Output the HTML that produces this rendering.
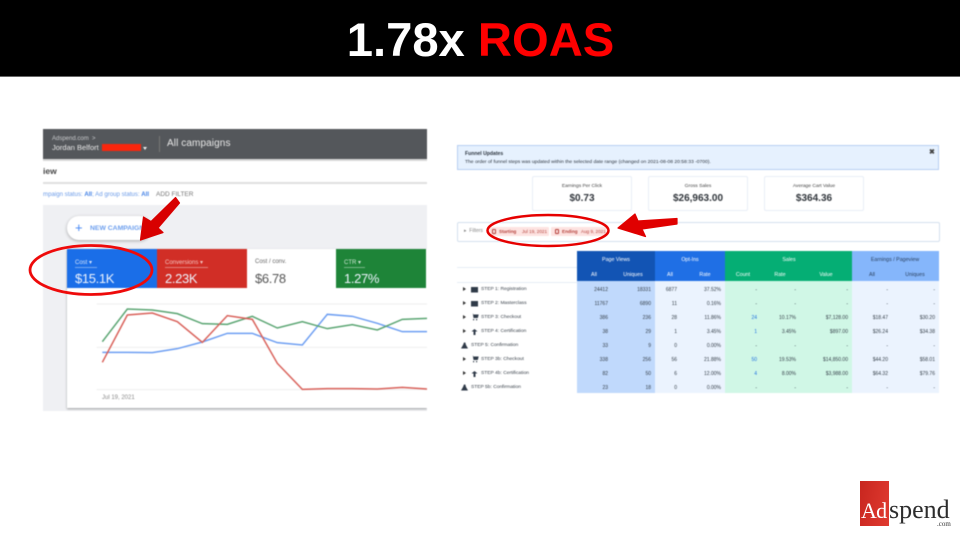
<!DOCTYPE html>
<html><head><meta charset="utf-8"><style>
*{box-sizing:border-box}
html,body{margin:0;padding:0}
body{width:960px;height:540px;position:relative;overflow:hidden;background:#fff;font-family:"Liberation Sans",sans-serif}
.a{position:absolute;white-space:nowrap}
#top{position:absolute;left:0;top:0;width:960px;height:77px;background:#000;border-bottom:1px solid #666}
#title{position:absolute;left:0;top:14px;width:961px;text-align:center;font-size:47.200px;line-height:54px;font-weight:bold;color:#fff}
#title span{color:#f00}
#L{position:absolute;left:43px;top:129px;width:384px;height:282px;overflow:hidden;background:#fff;filter:blur(.45px)}
#R{position:absolute;left:0;top:0;width:960px;height:540px;filter:blur(.45px)}
.card{position:absolute;top:120px;height:39px;width:90px}
.card .l{position:absolute;left:8px;top:10px;font-size:6px;color:#d6e4fb}
.card .u{position:absolute;left:8px;top:18px;height:1px;background:rgba(255,255,255,.4)}
.card .v{position:absolute;left:8px;top:22px;font-size:13px;letter-spacing:-.35px;color:#eef4fe}
.stat{position:absolute;top:176px;height:35px;width:100px;border:1px solid #e8eef6;border-radius:2px;background:#fff;text-align:center;color:#333}
.stat div{font-size:4.900px;margin-top:6px;line-height:7px;color:#444}
.stat b{display:block;font-size:10px;line-height:15px;color:#30353b;margin-top:1px}
.h{position:absolute;top:251px;height:30px}
.t{position:absolute;font-size:5.300px;transform:translateX(-50%);white-space:nowrap;color:#fff}
.col{position:absolute;top:281px;height:112px}
.r{position:absolute;left:0;width:960px;height:8px;font-size:5px;line-height:8px;color:#36404a}
.r span{position:absolute;white-space:nowrap}
.r span:nth-child(1){right:352px}.r span:nth-child(2){right:309px}.r span:nth-child(3){right:283px}.r span:nth-child(4){right:239px}
.r span:nth-child(5){right:203px}.r span:nth-child(6){right:164px}.r span:nth-child(7){right:112px}.r span:nth-child(8){right:72px}.r span:nth-child(9){right:25px}
.r em{font-style:normal;color:#1f6fe0}
.n{position:absolute;font-size:4.900px;line-height:8px;color:#3c444d;white-space:nowrap}
.tri{position:absolute;width:0;height:0;border-left:3px solid #333;border-top:2px solid transparent;border-bottom:2px solid transparent}
.ic{position:absolute}
.chip{position:absolute;top:228px;font-size:4.600px;line-height:7px;color:#b5413b;white-space:nowrap}
</style></head><body>
<div id="top"></div>
<div id="title">1.78x <span>ROAS</span></div>

<div id="L">
 <div class="a" style="left:0;top:0;width:384px;height:30px;background:#54575b"></div>
 <div class="a" style="left:0;top:30px;width:384px;height:2px;background:#d8d8d8"></div>
 <div class="a" style="left:9px;top:7px;font-size:6px;color:#c8cacc">Adspend.com &nbsp;&gt;</div>
 <div class="a" style="left:9px;top:14px;font-size:7.500px;color:#e8e8e8">Jordan Belfort</div>
 <div class="a" style="left:59px;top:15px;width:39px;height:7px;background:#f9260d"></div>
 <div class="a" style="left:100px;top:18px;width:0;height:0;border-left:2.500px solid transparent;border-right:2.500px solid transparent;border-top:3px solid #eee"></div>
 <div class="a" style="left:116px;top:7px;width:1px;height:16px;background:#777"></div>
 <div class="a" style="left:124px;top:9px;font-size:10px;letter-spacing:.1px;color:#e8e8e8">All campaigns</div>
 <div class="a" style="left:0;top:37px;font-size:8.500px;font-weight:bold;color:#444">iew</div>
 <div class="a" style="left:0;top:53px;width:384px;height:2px;background:#e0e0e0"></div>
 <div class="a" style="left:0;top:62px;font-size:6.100px;color:#6b9be8">mpaign status: <b style="color:#3f7fe6">All</b>; Ad group status: <b style="color:#3f7fe6">All</b></div>
 <div class="a" style="left:113px;top:62px;font-size:6.500px;color:#777">ADD FILTER</div>
 <div class="a" style="left:0;top:76px;width:384px;height:206px;background:#eff0f3"></div>
 <div class="a" style="left:24px;top:87px;width:84px;height:24px;border-radius:12px;background:#fff;box-shadow:0 1px 3px rgba(0,0,0,.3)"></div>
 <div class="a" style="left:32px;top:90px;font-size:13px;line-height:18px;color:#4285f4">+</div>
 <div class="a" style="left:47px;top:96px;font-size:6.800px;font-weight:bold;color:#6d9fee">NEW CAMPAIGN</div>
 <div class="a" style="left:24px;top:120px;width:360px;height:159px;background:#fff;box-shadow:0 1px 2px rgba(0,0,0,.35)"></div>
 <div class="card" style="left:24px;background:#1a6ee8"><div class="l">Cost &#9662;</div><div class="u" style="width:22px"></div><div class="v">$15.1K</div></div>
 <div class="card" style="left:114px;background:#d12e26"><div class="l" style="color:#f3c4c0">Conversions &#9662;</div><div class="u" style="width:43px"></div><div class="v">2.23K</div></div>
 <div class="card" style="left:204px;width:89px;background:#fff"><div class="l" style="color:#666">Cost / conv.</div><div class="v" style="color:#555">$6.78</div></div>
 <div class="card" style="left:293px;background:#1e8438"><div class="l" style="color:#cfe6d5">CTR &#9662;</div><div class="u" style="width:21px"></div><div class="v">1.27%</div></div>
 <svg class="a" style="left:-3px;top:161px" width="387" height="121" viewBox="40 290 387 121">
  <g transform="translate(40 290) scale(.33333)" fill="none">
   <path d="M170 42H1161M170 172H1161M170 299H1161" stroke="#eee" stroke-width="3"/>
   <path d="M187 187L262 187 337 188 412 176 487 156 562 130 637 130 712 158 787 165 862 73 937 79 1012 100 1087 125 1162 125" stroke="#6d9ef2" stroke-width="4.500"/>
   <path d="M187 155L262 57 337 60 412 71 487 101 562 103 637 79 712 114 787 95 862 116 937 104 1012 120 1087 88 1162 85" stroke="#5aa572" stroke-width="4.500"/>
   <path d="M187 217L262 75 337 69 412 95 487 157 562 77 637 88 712 220 787 298 862 296 937 296 1012 297 1087 292 1162 297" stroke="#d9615a" stroke-width="4.500"/>
  </g>
 </svg>
 <div class="a" style="left:59px;top:266px;font-size:6px;color:#8a8a8a">Jul 19, 2021</div>
</div>

<div id="R">
 <div class="a" style="left:457px;top:145px;width:482px;height:25px;background:#e6f1fe;border:1px solid #b7cff2"></div>
 <div class="a" style="left:465px;top:151px;font-size:5.100px;font-weight:bold;color:#2e3640">Funnel Updates</div>
 <div class="a" style="left:465px;top:159px;font-size:4.980px;color:#2e3640">The order of funnel steps was updated within the selected date range (changed on 2021-08-08 20:58:33 -0700).</div>
 <div class="a" style="left:929px;top:148px;font-size:7px;font-weight:bold;color:#444">&#10006;</div>

 <div class="stat" style="left:532px"><div>Earnings Per Click</div><b>$0.73</b></div>
 <div class="stat" style="left:648px"><div>Gross Sales</div><b>$26,963.00</b></div>
 <div class="stat" style="left:764px"><div>Average Cart Value</div><b>$364.36</b></div>

 <div class="a" style="left:457px;top:222px;width:483px;height:20px;border:1px solid #d5e0ee;border-radius:2px;background:#fff"></div>
 <div class="a" style="left:464px;top:228px;font-size:5px;color:#888">&#9656;&nbsp; Filters</div>
 <div class="a" style="left:489px;top:227px;width:60px;height:9px;background:#fde3e1;border-radius:1px"></div>
 <div class="a" style="left:551px;top:227px;width:56px;height:9px;background:#fde3e1;border-radius:1px"></div>
 <div class="a" style="left:492px;top:229px;width:4px;height:5px;border:1px solid #b5413b;border-radius:1px"></div>
 <div class="a" style="left:555px;top:229px;width:4px;height:5px;border:1px solid #b5413b;border-radius:1px"></div>
 <div class="chip" style="left:499px"><b>Starting</b></div>
 <div class="chip" style="left:522px">Jul 19, 2021</div>
 <div class="chip" style="left:562px"><b>Ending</b></div>
 <div class="chip" style="left:581px">Aug 9, 2021</div>

 <div class="a" style="left:457px;top:267px;width:120px;height:1px;background:#e6edf5"></div>
 <div class="a" style="left:457px;top:282px;width:120px;height:1px;background:#e6edf5"></div>
 <div class="h" style="left:577px;width:78px;background:#1254b4"></div>
 <div class="h" style="left:655px;width:70px;background:#1f6fe5"></div>
 <div class="h" style="left:725px;width:127px;background:#05ae74"></div>
 <div class="h" style="left:852px;width:87px;background:#85b6fb"></div>
 <div class="col" style="left:577px;width:78px;background:#c0d9fc"></div>
 <div class="col" style="left:655px;width:70px;background:#ebf3fe"></div>
 <div class="col" style="left:725px;width:127px;background:#d0f7e6"></div>
 <div class="col" style="left:852px;width:87px;background:#ebf3fe"></div>

 <div class="t" style="left:616px;top:257px">Page Views</div>
 <div class="t" style="left:690px;top:257px">Opt-Ins</div>
 <div class="t" style="left:789px;top:257px">Sales</div>
 <div class="t" style="left:895px;top:257px;color:#2c4260">Earnings / Pageview</div>
 <div class="t" style="left:594px;top:272px">All</div>
 <div class="t" style="left:633px;top:272px">Uniques</div>
 <div class="t" style="left:670px;top:272px">All</div>
 <div class="t" style="left:705px;top:272px">Rate</div>
 <div class="t" style="left:743px;top:272px">Count</div>
 <div class="t" style="left:780px;top:272px">Rate</div>
 <div class="t" style="left:826px;top:272px">Value</div>
 <div class="t" style="left:872px;top:272px;color:#2c4260">All</div>
 <div class="t" style="left:915px;top:272px;color:#2c4260">Uniques</div>

 <div class="r" style="top:285.500px"><span>24412</span><span>18331</span><span>6877</span><span>37.52%</span><span>-</span><span>-</span><span>-</span><span>-</span><span>-</span></div>
 <div class="r" style="top:299.500px"><span>11767</span><span>6890</span><span>11</span><span>0.16%</span><span>-</span><span>-</span><span>-</span><span>-</span><span>-</span></div>
 <div class="r" style="top:313.500px"><span>386</span><span>236</span><span>28</span><span>11.86%</span><span><em>24</em></span><span>10.17%</span><span>$7,128.00</span><span>$18.47</span><span>$30.20</span></div>
 <div class="r" style="top:327.500px"><span>38</span><span>29</span><span>1</span><span>3.45%</span><span><em>1</em></span><span>3.45%</span><span>$897.00</span><span>$26.24</span><span>$34.38</span></div>
 <div class="r" style="top:341.500px"><span>33</span><span>9</span><span>0</span><span>0.00%</span><span>-</span><span>-</span><span>-</span><span>-</span><span>-</span></div>
 <div class="r" style="top:355.500px"><span>338</span><span>256</span><span>56</span><span>21.88%</span><span><em>50</em></span><span>19.53%</span><span>$14,850.00</span><span>$44.20</span><span>$58.01</span></div>
 <div class="r" style="top:369.500px"><span>82</span><span>50</span><span>6</span><span>12.00%</span><span><em>4</em></span><span>8.00%</span><span>$3,988.00</span><span>$64.32</span><span>$79.76</span></div>
 <div class="r" style="top:383.500px"><span>23</span><span>18</span><span>0</span><span>0.00%</span><span>-</span><span>-</span><span>-</span><span>-</span><span>-</span></div>

 <div class="tri" style="left:463px;top:287px"></div>
 <div class="tri" style="left:463px;top:301px"></div>
 <div class="tri" style="left:463px;top:315px"></div>
 <div class="tri" style="left:463px;top:329px"></div>
 <div class="tri" style="left:463px;top:357px"></div>
 <div class="tri" style="left:463px;top:371px"></div>

 <svg class="ic" style="left:0;top:1px" width="960" height="540" viewBox="0 0 960 540" fill="#2f3a48">
  <path d="M471 286h7v5.500h-7zM471 300h7v5.500h-7z"/>
  <path d="M471 312.500h1.800l.7 4.500h4.300l.9-3.500h-5.500v-1zM473 318h1.200v1.200h-1.200zM476 318h1.200v1.200h-1.200zM471 354.500h1.800l.7 4.500h4.300l.9-3.500h-5.500v-1zM473 360h1.200v1.200h-1.200zM476 360h1.200v1.200h-1.200z"/>
  <path d="M474.500 328l3 2.500h-2v3.500h-2v-3.500h-2zM474.500 370l3 2.500h-2v3.500h-2v-3.500h-2z"/>
  <path d="M464 341.500h1.300l.7 2.500 2 3.500h-7l2-3.500zM464 383.500h1.300l.7 2.500 2 3.500h-7l2-3.500z"/>
 </svg>
 <div class="n" style="left:481px;top:286px">STEP 1: Registration</div>
 <div class="n" style="left:481px;top:300px">STEP 2: Masterclass</div>
 <div class="n" style="left:481px;top:314px">STEP 3: Checkout</div>
 <div class="n" style="left:481px;top:328px">STEP 4: Certification</div>
 <div class="n" style="left:471px;top:342px">STEP 5: Confirmation</div>
 <div class="n" style="left:481px;top:356px">STEP 3b: Checkout</div>
 <div class="n" style="left:481px;top:370px">STEP 4b: Certification</div>
 <div class="n" style="left:471px;top:384px">STEP 5b: Confirmation</div>
</div>

<svg class="a" style="left:0;top:0" width="960" height="540" viewBox="0 0 960 540">
 <ellipse cx="91" cy="270" rx="61" ry="24.500" fill="none" stroke="#ee0a0a" stroke-width="2.800"/>
 <ellipse cx="548" cy="230.500" rx="60.500" ry="15.500" fill="none" stroke="#e60000" stroke-width="2.500"/>
 <path d="M140.500 240L143.500 217 151 221.500 175.500 197.500 179.500 203 158 228 163 232.500Z" fill="#d80000" stroke="#d80000" stroke-width="1.200" stroke-linejoin="round"/>
 <path d="M618 228L635 214 638 221 677 218.500 677 224 642 229 645.500 236.500Z" fill="#e00000" stroke="#e00000" stroke-width="1.200" stroke-linejoin="round"/>
</svg>

<div class="a" style="left:860px;top:481px;width:29px;height:45px;background:linear-gradient(100deg,#c8261f,#e03a30)"></div>
<div class="a" style="left:861px;top:498px;font-family:'Liberation Serif',serif;font-size:22px;line-height:26px;letter-spacing:-.8px;color:#fff">Ad</div>
<div class="a" style="left:889px;top:497px;font-family:'Liberation Serif',serif;font-size:26px;line-height:26px;color:#2d2d2d">spend</div>
<div class="a" style="left:937px;top:520px;font-family:'Liberation Serif',serif;font-size:7px;line-height:8px;color:#333">.com</div>
</body></html>
